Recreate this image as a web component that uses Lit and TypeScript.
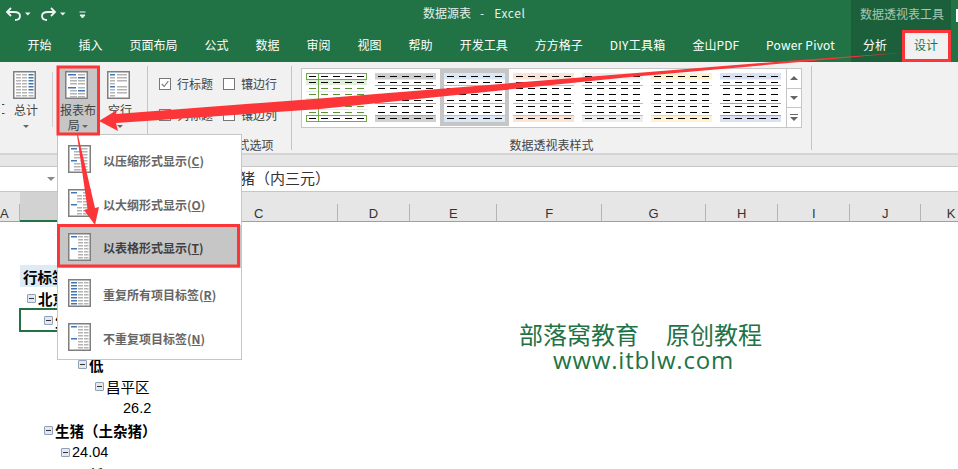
import { LitElement, html, css, svg } from "lit";
import { customElement } from "lit/decorators.js";

const TABS: [string, string][] = [["开始",""],["插入",""],["页面布局",""],["公式",""],["数据",""],["审阅",""],["视图",""],["帮助",""],["开发工具",""],["方方格子",""],["DIY工具箱","diy"],["金山PDF",""],["Power Pivot","latin"]];
const COLS: [string, number, string?][] = [
  ["A",20,"a"],["B",161,"sel"],["C",156.5,"c"],["D",72],["E",87.5],["F",104.5],["G",104.2],["H",72],["I",72],["J",71.3],["K",60]
];
const ROWS: [number, boolean, string, boolean, string?][] = [
  [0,false,"行标签",true,"head"],
  [0,true,"北京",true],
  [1,true,"生猪（内三元）",true,"cur"],
  [2,true,"24.04",false],
  [3,true,"低",true],
  [4,true,"昌平区",false],
  [5,false,"26.2",false],
  [1,true,"生猪（土杂猪）",true],
  [2,true,"24.04",false],
  [3,false,"低",true],
];
const THUMBS = [
  ["#d0d0d0","#a6a6a6"],["#dae7f5","#a3c2e6"],["#fbe4d5","#f4b183"],["#ededed","#bfbfbf"],["#fff2cc","#ffd966"],["#d9e1f2","#8ea9db"]
];

function dashes(colorFor: (row: number) => string) {
  const out = [];
  for (let r = 0; r < 8; r++) for (let c = 0; c < 5; c++)
    out.push(svg`<rect x=${3 + 12 * c} y=${3 + 6 * r} width="7" height="1" fill=${colorFor(r)}/>`);
  return out;
}
function greenThumb() {
  return html`<svg width="61" height="49" viewBox="0 0 61 49">
    <rect x="0" y="6" width="61" height="6" fill="#e2efda"/>
    <rect x="0" y="25" width="61" height="5" fill="#e2efda"/>
    <rect x="0" y="18" width="61" height="1" fill="#e2efda"/>
    <rect x="0" y="36" width="61" height="1" fill="#e2efda"/>
    <rect x="12" y="0" width="1" height="49" fill="#70ad47"/>
    <rect x=".5" y=".5" width="60" height="6" fill="none" stroke="#70ad47"/>
    <rect x=".5" y="42.5" width="60" height="6" fill="none" stroke="#70ad47"/>
    ${dashes((r) => (r === 2 || r === 3 || r === 5 || r === 6 ? "#5b9137" : "#000"))}
  </svg>`;
}
function thumb(fill: string, line: string) {
  return html`<svg width="61" height="49" viewBox="0 0 61 49">
    <rect x="0" y="0" width="61" height="6.5" fill=${fill}/>
    <rect x="0" y="42" width="61" height="7" fill=${fill}/>
    <rect x="0" y="12" width="61" height="1" fill=${line}/>
    <rect x="0" y="30" width="61" height="1" fill=${line}/>
    <rect x="0" y="42" width="61" height="1" fill=${line}/>
    ${dashes(() => "#000")}
  </svg>`;
}

/* page-layout pictogram: frame, blue label bars and grey value bars */
function layoutIcon(kind: string) {
  const blue = "#3f78b5", grey = "#b4b4b4";
  const bars = [];
  const rows = [3,6,9,12,15,18,21,24];
  if (kind === "compact") {
    bars.push(svg`<rect x="3" y="3" width="6" height="1.5" fill=${blue}/>`);
    bars.push(svg`<rect x="3" y="15" width="6" height="1.5" fill=${blue}/>`);
    rows.forEach((y, i) => {
      if (i > 0) bars.push(svg`<rect x="6" y=${y} width="6" height="1.5" fill=${i === 4 ? "none" : grey}/>`);
      bars.push(svg`<rect x="12.5" y=${y} width="7" height="1.5" fill=${grey}/>`);
    });
  } else if (kind === "outline") {
    bars.push(svg`<rect x="3" y="3" width="6" height="1.5" fill=${blue}/>`);
    bars.push(svg`<rect x="3" y="15" width="6" height="1.5" fill=${blue}/>`);
    rows.forEach((y, i) => {
      if (i > 0 && i !== 4) bars.push(svg`<rect x="9" y=${y} width="5" height="1.5" fill=${grey}/>`);
      bars.push(svg`<rect x="15" y=${y} width="5" height="1.5" fill=${grey}/>`);
    });
  } else {
    const ys = kind === "repeat" ? rows : [3, 15];
    ys.forEach((y) => bars.push(svg`<rect x="3" y=${y} width="6" height="1.5" fill=${blue}/>`));
    rows.forEach((y) => {
      bars.push(svg`<rect x="10" y=${y} width="5" height="1.5" fill=${grey}/>`);
      bars.push(svg`<rect x="16" y=${y} width="4.5" height="1.5" fill=${grey}/>`);
    });
  }
  return html`<svg class="lay" width="23" height="28" viewBox="0 0 23 28">
    <rect x=".75" y=".75" width="21.5" height="26.5" fill="#fff" stroke="#7f7f7f" stroke-width="1.5"/>
    ${bars}
  </svg>`;
}
function ribbonIcon(kind: string) {
  const blue = "#3f78b5", grey = "#b4b4b4";
  const rows = [3,6,9,12,15,18,21,24];
  let inner;
  if (kind === "total") {
    inner = rows.map((y) => svg`
      <rect x="3" y=${y} width="5" height="1.5" fill=${grey}/>
      <rect x="9" y=${y} width="5" height="1.5" fill=${grey}/>
      <rect x="15.5" y=${y} width="5" height="1.5" fill=${y > 2 && y < 19 ? blue : grey}/>`);
  } else if (kind === "blank") {
    inner = rows.map((y, i) => svg`
      <rect x="3" y=${y} width="5" height="1.5" fill=${i === 0 || i === 4 ? blue : grey}/>
      <rect x="10" y=${y} width="10" height="1.5" fill=${i === 3 || i === 7 ? "none" : grey}/>`);
  } else {
    inner = [
      svg`<rect x="3" y="3" width="8" height="1.5" fill=${blue}/>`,
      svg`<rect x="3" y="16" width="8" height="1.5" fill=${blue}/>`,
      ...[6,9,12,19,22,25].map((y) => svg`<rect x="5" y=${y} width="7" height="1.5" fill=${grey}/>`),
      ...[3,6,9,12,16,19,22,25].map((y) => svg`<rect x="13" y=${y} width="7" height="1.5" fill=${y === 6 || y === 19 ? blue : grey}/>`),
    ];
  }
  return html`<svg class="lay shift" width="23" height="28" viewBox="0 0 23 28">
    <rect x=".75" y=".75" width="21.5" height="26.5" fill="#fff" stroke="#7f7f7f" stroke-width="1.5"/>
    ${inner}
  </svg>`;
}

@customElement("app-root")
export class AppRoot extends LitElement {
  static styles = css`
    :host {
      display: block; position: relative; width: 958px; height: 469px; overflow: hidden;
      background: #fff; color: #444;
      font-family: "Noto Sans CJK SC", "Liberation Sans", sans-serif; font-size: 12px;
    }
    .titlebar { display: grid; grid-template-columns: 423px 428px 100px 7px; height: 30px; background: #217346; }
    .qat { display: flex; align-items: flex-start; }
    .title { display: flex; gap: 9px; color: #e6efe9; line-height: 26px; white-space: pre; }
    .title .en { letter-spacing: .6px; margin-left: 1px; }
    .tools { background: #1c5f3b; color: #a4c8b2; line-height: 28px; padding-left: 9px; }
    .winbtn { display: flex; justify-content: flex-end; align-items: flex-start; padding-top: 9px; }
    .winbtn i { display: block; width: 2px; height: 13px; background: #fff; }
    .tabs { display: flex; height: 32px; background: #217346; padding-left: 14px; color: #fff; align-items: stretch; }
    .tab { padding: 0 13.5px; line-height: 30px; white-space: nowrap; }
    .tab.latin { letter-spacing: .2px; }
    .tab.diy { letter-spacing: .3px; }
    .ctx { margin-left: auto; margin-right: 7px; display: flex; background: #1c5f3b; width: 100px; }
    .ctx .tab { padding: 0; text-align: center; }
    .ctx .an { width: 52px; padding-right: 4px; box-sizing: border-box; }
    .ctx .de { width: 48px; padding-right: 2px; box-sizing: border-box; background: #f1f1f1; color: #217346; }

    .ribbon { display: flex; height: 93px; box-sizing: border-box; padding-top: 4px; background: #f1f1f1; border-bottom: 2px solid #d4d4d4; }
    .group { display: flex; flex-direction: column; height: 87px; }
    .g1 { width: 147px; } .g2 { width: 143px; } .g3 { width: 519px; }
    .body { display: flex; height: 70px; }
    .g1 .body { padding-left: 2px; }
    .g2 .body { padding-left: 11px; }
    .g3 .body { padding-left: 9px; padding-top: 2px; }
    .glabel { height: 16px; line-height: 16px; margin-top: 2px; text-align: center; white-space: nowrap; }
    .vsep { width: 1px; height: 84px; background: #c6c6c6; }
    .vsep2 { width: 1px; height: 55px; margin: 6px 4px 0 5px; background: #d0d0d0; }
    .stub { width: 3px; overflow: hidden; padding-top: 35px; line-height: 15px; }
    .stub span { display: block; margin-left: -9px; width: 12px; }
    .big { width: 42px; height: 70px; box-sizing: border-box; padding-top: 5px; display: flex; flex-direction: column; align-items: center; text-align: center; line-height: 15px; }
    .big.on { background: #c6c6c6; }
    .big .txt { margin-top: 3px; }
    .caret { display: inline-block; width: 0; height: 0; border: 3px solid transparent; border-top: 3.5px solid #666; border-bottom: 0; vertical-align: 2px; }
    .lay { display: block; flex: none; }
    .lay.shift { margin-right: 3px; }
    .opts { display: grid; grid-template-columns: 64px auto; grid-auto-rows: 31px; padding-top: 2px; }
    .opt { display: flex; align-items: center; gap: 6px; padding-top: 0; white-space: nowrap; height: 31px; }
    .cb { width: 12px; height: 12px; box-sizing: border-box; background: #fff; border: 1px solid #777; display: block; }

    .gallery { display: flex; height: 60px; width: 501px; box-sizing: border-box; background: #fff; border: 1px solid #c6c6c6; border-width: 1.5px 1px 1px; }
    .cell { width: 69px; height: 57px; box-sizing: border-box; border: 4px solid transparent; }
    .cell.on { border-color: #c6c6c6; }
    .cell svg { display: block; }
    .scroll { margin-left: 1px; width: 14px; display: flex; flex-direction: column; border-left: 1px solid #c6c6c6; }
    .scroll div { flex: 1; display: flex; flex-direction: column; align-items: center; justify-content: center; border-bottom: 1px solid #c6c6c6; gap: 2px; }
    .scroll div:last-child { border-bottom: 0; }
    .up { width: 0; height: 0; border: 4px solid transparent; border-bottom: 4px solid #666; border-top: 0; }
    .dn { width: 0; height: 0; border: 4px solid transparent; border-top: 4px solid #666; border-bottom: 0; }
    .bar { width: 8px; height: 1px; background: #666; }

    .strip { height: 11px; background: #e6e6e6; }
    .fbar { height: 24px; background: #fff; border-top: 1px solid #c6c6c6; border-bottom: 1px solid #c6c6c6; display: flex; align-items: center; font-size: 15px; color: #333; padding-left: 47px; }
    .fbar .dn { border-width: 4px 4px 0; border-top-color: #8a8a8a; }
    .fbar span { margin-left: 170px; margin-top: -3px; white-space: nowrap; }
    .cols { display: flex; height: 29px; background: #e6e6e6; border-bottom: 1px solid #a0a0a0; font: 13px "Liberation Sans", sans-serif; color: #333; }
    .col { flex: none; box-sizing: border-box; display: flex; align-items: flex-end; justify-content: center; line-height: 15px; position: relative; }
    .col::after { content: ""; position: absolute; right: 0; bottom: 0; width: 1px; height: 17px; background: #b4b4b4; }
    .col.a { justify-content: flex-start; }
    .col.sel { background: #d2d2d2; border-bottom: 2px solid #217346; height: 30px; }
    .col.c { justify-content: flex-start; padding-left: 73px; }

    .rows { padding-top: 43px; }
    .row { width: 161px; margin-left: 20px; height: 22px; box-sizing: border-box; display: flex; align-items: center; gap: 2px; font-size: 14.5px; color: #000; white-space: nowrap; }
    .row.bold { font-weight: 700; }
    .row.head { background: #ddebf7; padding-left: 3px; }
    .row.cur { outline: 2px solid #217346; outline-offset: -1px; }
    .row .num { font-family: "Liberation Sans", sans-serif; }
    .pm { width: 9px; height: 9px; flex: none; box-sizing: border-box; border: 1px solid #8ea0bb; border-radius: 1px; background: #e4e8ee; position: relative; }
    .pm::after { content: ""; position: absolute; left: 1px; right: 1px; top: 3px; height: 1px; background: #333; }
    .nopm { width: 9px; flex: none; }

    .menu { position: absolute; left: 57px; top: 134px; width: 185px; height: 226px; box-sizing: border-box; padding-top: 2px; background: #fff; border: 1px solid #c6c6c6; font-weight: 700; color: #666; }
    .item { display: flex; align-items: center; height: 44px; padding-left: 10px; gap: 12px; }
    .item.on { background: #c6c6c6; color: #404040; height: 43px; margin-bottom: 3px; }
    .item span { padding-top: 2px; white-space: nowrap; }
    .item u { text-underline-offset: 1px; }

    .mark { position: absolute; left: 519px; top: 319px; width: 243px; color: #217346; text-align: center; }
    .mark .a { display: flex; justify-content: space-between; font-size: 24px; line-height: 30px; }
    .mark .b { font: 24px/22px "Open Sans", sans-serif; white-space: nowrap; letter-spacing: .8px; padding-left: 6px; }
    .over { position: absolute; left: 0; top: 0; pointer-events: none; }
  `;

  render() {
    const red = "#fc3638";
    return html`
      <div class="titlebar">
        <div class="qat">
          <svg width="100" height="30" viewBox="0 0 100 30" fill="none" stroke="#f2f2f2" stroke-width="1.8">
            <path d="M11 8 L7 12 L11 16 M7 12 H14 C18 12 20 14 20 16 C20 18.5 18 20 15 20"/>
            <path d="M51 8 L55 12 L51 16 M55 12 H48 C44 12 42 14 42 16 C42 18.5 44 20 47 20"/>
            <path d="M25 12.5 h5.5 l-2.75 3 z M60 12.5 h5.5 l-2.75 3 z" fill="#f2f2f2" stroke="none"/>
            <path d="M79.5 12 h6 M80 15 h5 l-2.5 3 z" fill="#f2f2f2" stroke="#f2f2f2" stroke-width="1"/>
          </svg>
        </div>
        <div class="title"><span>数据源表</span><span>-</span><span class="en">Excel</span></div>
        <div class="tools">数据透视表工具</div>
        <div class="winbtn"><i></i></div>
      </div>
      <div class="tabs">
        ${TABS.map(([t, k]) => html`<div class="tab ${k}">${t}</div>`)}
        <div class="ctx"><div class="tab an">分析</div><div class="tab de">设计</div></div>
      </div>

      <div class="ribbon">
        <div class="group g1">
          <div class="body">
            <div class="stub"><span>汇</span></div>
            <div class="big">${ribbonIcon("total")}<div class="txt">总计<br /><i class="caret"></i></div></div>
            <div class="vsep2"></div>
            <div class="big on">${ribbonIcon("report")}<div class="txt">报表布<br />局 <i class="caret"></i></div></div>
            <div class="big">${ribbonIcon("blank")}<div class="txt">空行<br /><i class="caret"></i></div></div>
          </div>
          <div class="glabel">布局</div>
        </div>
        <div class="vsep"></div>
        <div class="group g2">
          <div class="body">
            <div class="opts">
              <label class="opt"><svg class="cb" viewBox="0 0 12 12"><path d="M2 6 L5 9 L10 2.5" fill="none" stroke="#777" stroke-width="1.3"/></svg>行标题</label>
              <label class="opt"><i class="cb"></i>镶边行</label>
              <label class="opt"><svg class="cb" viewBox="0 0 12 12"><path d="M2 6 L5 9 L10 2.5" fill="none" stroke="#777" stroke-width="1.3"/></svg>列标题</label>
              <label class="opt"><i class="cb"></i>镶边列</label>
            </div>
          </div>
          <div class="glabel">数据透视表样式选项</div>
        </div>
        <div class="vsep"></div>
        <div class="group g3">
          <div class="body">
            <div class="gallery">
              <div class="cell">${greenThumb()}</div>
              ${THUMBS.map((t, i) => html`<div class="cell ${i === 1 ? "on" : ""}">${thumb(t[0], t[1])}</div>`)}
              <div class="scroll">
                <div><i class="up"></i></div>
                <div><i class="dn"></i></div>
                <div><i class="bar"></i><i class="dn"></i></div>
              </div>
            </div>
          </div>
          <div class="glabel">数据透视表样式</div>
        </div>
        <div class="vsep"></div>
      </div>

      <div class="strip"></div>
      <div class="fbar"><i class="dn"></i><span>生猪（内三元）</span></div>
      <div class="cols">
        ${COLS.map(([n, w, k]) => html`<div class="col ${k ?? ""}" style="width:${w}px">${n}</div>`)}
      </div>
      <div class="rows">
        ${ROWS.map(([lv, pm, t, b, k]) => html`
          <div class="row ${b ? "bold" : ""} ${k ?? ""}" style=${k === "head" ? "" : `padding-left:${7 + 17 * lv}px`}>
            ${k === "head" ? "" : pm ? html`<i class="pm"></i>` : html`<i class="nopm"></i>`}
            <span class=${/^[0-9.]+$/.test(t) ? "num" : ""}>${t}</span>
          </div>`)}
      </div>

      <div class="mark">
        <div class="a"><span>部落窝教育</span><span>原创教程</span></div>
        <div class="b">www.itblw.com</div>
      </div>

      <div class="menu">
        <div class="item">${layoutIcon("compact")}<span>以压缩形式显示(<u>C</u>)</span></div>
        <div class="item">${layoutIcon("outline")}<span>以大纲形式显示(<u>O</u>)</span></div>
        <div class="item on">${layoutIcon("table")}<span>以表格形式显示(<u>T</u>)</span></div>
        <div class="item">${layoutIcon("repeat")}<span>重复所有项目标签(<u>R</u>)</span></div>
        <div class="item">${layoutIcon("table")}<span>不重复项目标签(<u>N</u>)</span></div>
      </div>

      <svg class="over" width="958" height="469" viewBox="0 0 958 469">
        <rect x="58" y="67" width="40.5" height="67" fill="none" stroke=${red} stroke-width="3"/>
        <rect x="903.5" y="31.5" width="46" height="29" fill="none" stroke=${red} stroke-width="3"/>
        <rect x="58.5" y="225.5" width="180" height="40.5" fill="none" stroke=${red} stroke-width="3"/>
        <polygon fill=${red} points="99,121 117,110 116,114 320,98.5 630,73.5 800,60 905,52.5 800,62 630,77 320,109 116,123 118,131"/>
        <polygon fill=${red} points="77,135 78,135 95,208 99,207 95,225 84,210 87.5,209"/>
      </svg>
    `;
  }
}
